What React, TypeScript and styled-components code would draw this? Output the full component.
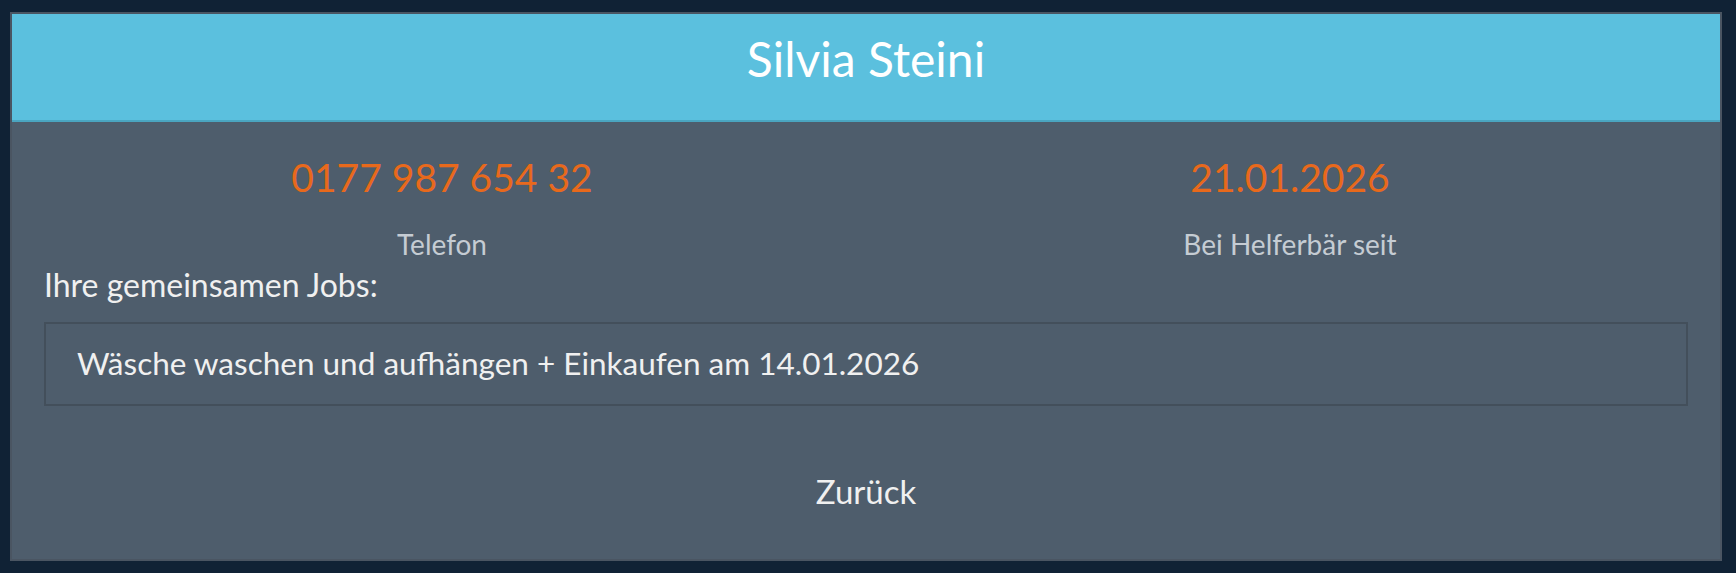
import React from 'react'
import styled, { createGlobalStyle } from 'styled-components'

const GlobalStyle = createGlobalStyle`
  html, body {
    margin: 0;
    padding: 0;
    background-color: #102235;
  }
  body {
    font-family: Lato, 'Noto Sans', sans-serif;
  }
  * {
    box-sizing: border-box;
  }
`

const Page = styled.div`
  padding: 12px 14px 12px 10px;
`

const Panel = styled.div`
  border: 2px solid #4a5562;
  background-color: #4e5d6c;
`

const Header = styled.div`
  background-color: #5bc0de;
  border-bottom: 2px solid #4aa5c0;
  padding: 16px 0 32px;
  text-align: center;
`

const Title = styled.h1`
  margin: 0;
  font-size: 48px;
  font-weight: 400;
  line-height: 1.2;
  color: #ffffff;
`

const Body = styled.div`
  padding: 32px 0 0;
`

const InfoRow = styled.div`
  display: grid;
  grid-template-columns: 1fr 1fr;
  padding: 0 6px;
`

const InfoCell = styled.div`
  display: flex;
  flex-direction: column;
  align-items: center;
  gap: 28px;
`

const InfoValue = styled.div`
  font-size: 39px;
  line-height: 1.2;
  color: #e8691c;
`

const InfoLabel = styled.div`
  font-size: 28px;
  line-height: 1.2;
  color: #c5ccd3;
`

const Jobs = styled.div`
  padding: 4px 32px 0;
`

const JobsTitle = styled.div`
  font-size: 32px;
  line-height: 1.2;
  color: #f0f0f0;
  margin-bottom: 18px;
`

const JobItem = styled.div`
  border: 2px solid #434f5b;
  padding: 21px 31px;
  font-size: 31.5px;
  line-height: 1.2;
  color: #f0f0f0;
`

const Footer = styled.div`
  display: flex;
  justify-content: center;
  padding: 66px 0 47px;
`

const BackButton = styled.button`
  background: transparent;
  border: none;
  padding: 0;
  font-family: inherit;
  font-size: 33px;
  line-height: 1.2;
  color: #f0f0f0;
  cursor: pointer;
`

const info = [
  { value: '0177 987 654 32', label: 'Telefon' },
  { value: '21.01.2026', label: 'Bei Helferbär seit' },
]

const jobs = ['Wäsche waschen und aufhängen + Einkaufen am 14.01.2026']

export default function App() {
  return (
    <>
      <GlobalStyle />
      <Page>
        <Panel>
          <Header>
            <Title>Silvia Steini</Title>
          </Header>
          <Body>
            <InfoRow>
              {info.map((item) => (
                <InfoCell key={item.label}>
                  <InfoValue>{item.value}</InfoValue>
                  <InfoLabel>{item.label}</InfoLabel>
                </InfoCell>
              ))}
            </InfoRow>
            <Jobs>
              <JobsTitle>Ihre gemeinsamen Jobs:</JobsTitle>
              {jobs.map((job) => (
                <JobItem key={job}>{job}</JobItem>
              ))}
            </Jobs>
            <Footer>
              <BackButton>Zurück</BackButton>
            </Footer>
          </Body>
        </Panel>
      </Page>
    </>
  )
}
